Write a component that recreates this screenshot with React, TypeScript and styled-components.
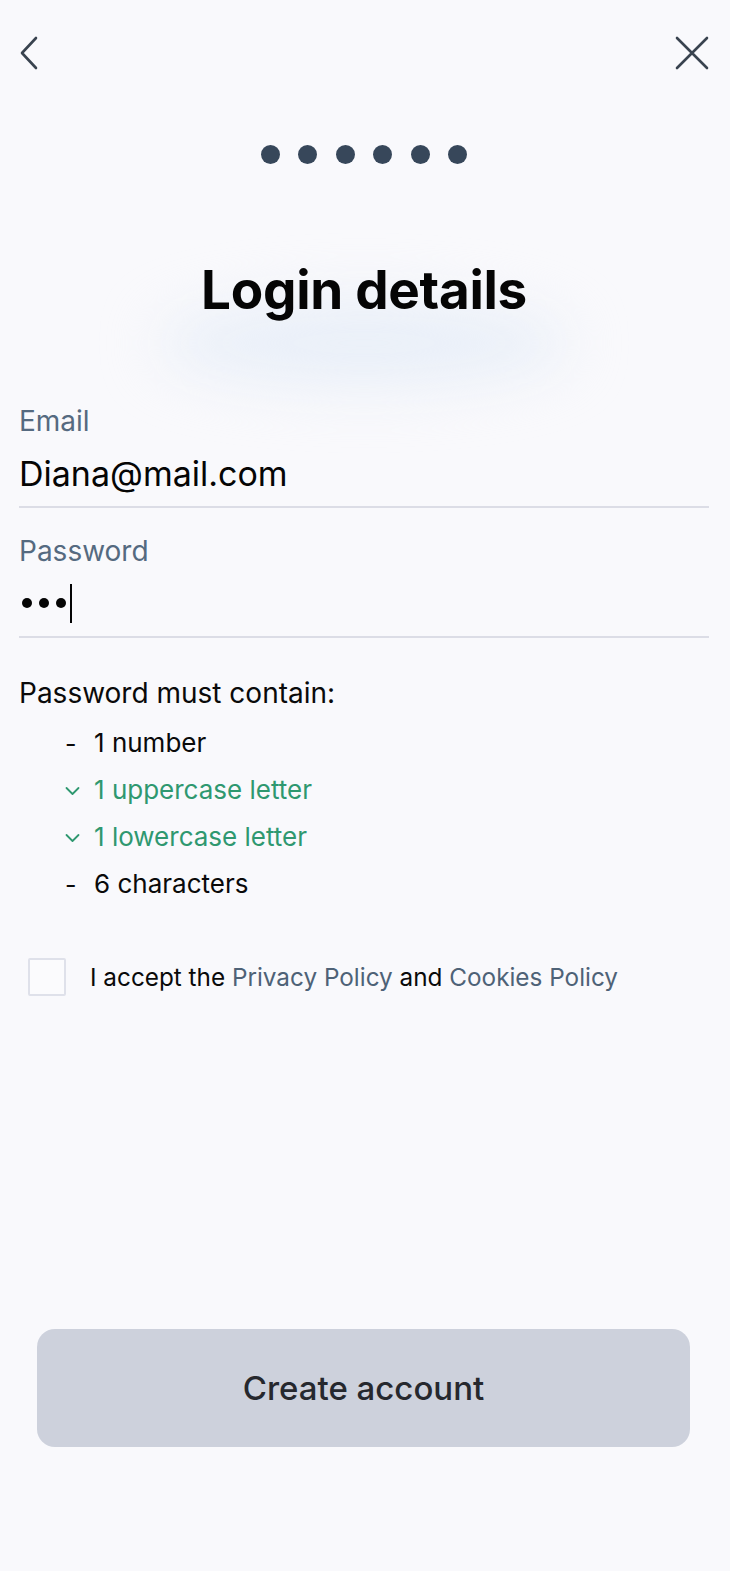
import styled, { createGlobalStyle } from 'styled-components'

const GlobalStyle = createGlobalStyle`
    html, body {
        margin: 0;
        padding: 0;
        background: #f9f9fc;
    }
    body {
        font-family: Inter, "Noto Sans", sans-serif;
        color: #000;
    }
`

const rules = [
    { text: '1 number', done: false },
    { text: '1 uppercase letter', done: true },
    { text: '1 lowercase letter', done: true },
    { text: '6 characters', done: false },
]

const App = () => {
    return (
        <Screen>
            <GlobalStyle />
            <Header>
                <IconButton aria-label="Back">
                    <svg width="20" height="34" viewBox="0 0 20 34" fill="none">
                        <path d="M17 2L3 17L17 32" stroke="#39434f" strokeWidth="2.6" strokeLinecap="round" strokeLinejoin="round" />
                    </svg>
                </IconButton>
                <IconButton aria-label="Close">
                    <svg width="34" height="34" viewBox="0 0 34 34" fill="none">
                        <path d="M2 2L32 32M32 2L2 32" stroke="#39434f" strokeWidth="2.6" strokeLinecap="round" />
                    </svg>
                </IconButton>
            </Header>

            <Steps>
                {[0, 1, 2, 3, 4, 5].map(i => <Dot key={i} />)}
            </Steps>

            <TitleWrap>
                <Title>Login details</Title>
            </TitleWrap>

            <Field>
                <Label>Email</Label>
                <Value>Diana@mail.com</Value>
            </Field>

            <Field>
                <Label>Password</Label>
                <Value>
                    <Secret>
                        <i /><i /><i />
                    </Secret>
                    <Caret />
                </Value>
            </Field>

            <Rules>
                <RulesTitle>Password must contain:</RulesTitle>
                {rules.map(r => (
                    <Rule key={r.text} done={r.done}>
                        <Mark>
                            {r.done ? (
                                <svg width="15" height="11" viewBox="0 0 15 11" fill="none">
                                    <path d="M1.5 3L7.5 9L13.5 3" stroke="#2f9870" strokeWidth="1.8" strokeLinecap="round" strokeLinejoin="round" />
                                </svg>
                            ) : '-'}
                        </Mark>
                        {r.text}
                    </Rule>
                ))}
            </Rules>

            <Consent>
                <CheckBox />
                <ConsentText>
                    I accept the <Link>Privacy Policy</Link> and <Link>Cookies Policy</Link>
                </ConsentText>
            </Consent>

            <Footer>
                <PrimaryButton>Create account</PrimaryButton>
            </Footer>
        </Screen>
    )
}

const Screen = styled.div`
    display: flex;
    flex-direction: column;
    min-height: 1571px;
    padding: 0 21px 0 19px;
    box-sizing: border-box;
`

const Header = styled.div`
    display: flex;
    justify-content: space-between;
    align-items: center;
    padding-top: 36px;
`

const IconButton = styled.button`
    background: none;
    border: none;
    padding: 0;
    display: flex;
    cursor: pointer;
`

const Steps = styled.div`
    display: flex;
    justify-content: center;
    gap: 18.5px;
    margin-top: 75px;
`

const Dot = styled.span`
    width: 19px;
    height: 19px;
    border-radius: 50%;
    background: #37475a;
`

const TitleWrap = styled.div`
    position: relative;
    display: flex;
    justify-content: center;
    align-items: flex-start;
    margin-top: 96px;
    height: 144px;

    /* soft glow under the heading */
    &::before {
        content: "";
        position: absolute;
        left: 140px;
        right: 140px;
        top: 40px;
        height: 86px;
        border-radius: 50%;
        background: #e9eff8;
        filter: blur(28px);
    }
`

const Title = styled.h1`
    position: relative;
    margin: 0;
    font-size: 53px;
    font-weight: 700;
    letter-spacing: -0.3px;
    line-height: 60px;
    color: #050505;
`

const Field = styled.div`
    display: flex;
    flex-direction: column;
    border-bottom: 2px solid #dcdde6;
    padding-bottom: 11px;

    & + & {
        margin-top: 26px;
    }
`

const Label = styled.div`
    font-size: 28px;
    line-height: 34px;
    color: #556a80;
`

const Value = styled.div`
    display: flex;
    align-items: center;
    height: 44px;
    margin-top: 13px;
    font-size: 34px;
    color: #050505;
`

const Secret = styled.span`
    display: flex;
    gap: 7px;
    padding-left: 3px;

    i {
        width: 10px;
        height: 10px;
        border-radius: 50%;
        background: #050505;
    }
`

const Caret = styled.span`
    width: 2px;
    height: 39px;
    margin-left: 4px;
    background: #050505;
`

const Rules = styled.div`
    display: flex;
    flex-direction: column;
    margin-top: 38px;
`

const RulesTitle = styled.div`
    font-size: 28px;
    line-height: 34px;
    margin-bottom: 9px;
    color: #0a0a0a;
`

const Rule = styled.div<{ done: boolean }>`
    display: flex;
    align-items: center;
    height: 47px;
    padding-left: 46px;
    font-size: 26px;
    color: ${p => (p.done ? '#2f9870' : '#0a0a0a')};
`

const Mark = styled.span`
    display: flex;
    align-items: center;
    width: 29px;
    font-size: 25px;
    padding-top: 2px;
`

const Consent = styled.div`
    display: flex;
    align-items: center;
    gap: 24px;
    margin-top: 51px;
    padding-left: 9px;
`

const CheckBox = styled.span`
    width: 34px;
    height: 34px;
    border: 2px solid #dfe1ea;
    border-radius: 2px;
    background: #fbfbfd;
`

const ConsentText = styled.div`
    font-size: 24.3px;
    color: #0a0a0a;
`

const Link = styled.a`
    color: #4e6277;
    text-decoration: none;
`

const Footer = styled.div`
    display: flex;
    margin-top: auto;
    padding: 0 19px 124px 18px;
`

const PrimaryButton = styled.button`
    flex: 1;
    height: 118px;
    border: none;
    border-radius: 18px;
    background: #cdd1dc;
    font-family: Inter, "Noto Sans", sans-serif;
    font-size: 33px;
    font-weight: 500;
    color: #26282e;
    cursor: pointer;
`

export default App
